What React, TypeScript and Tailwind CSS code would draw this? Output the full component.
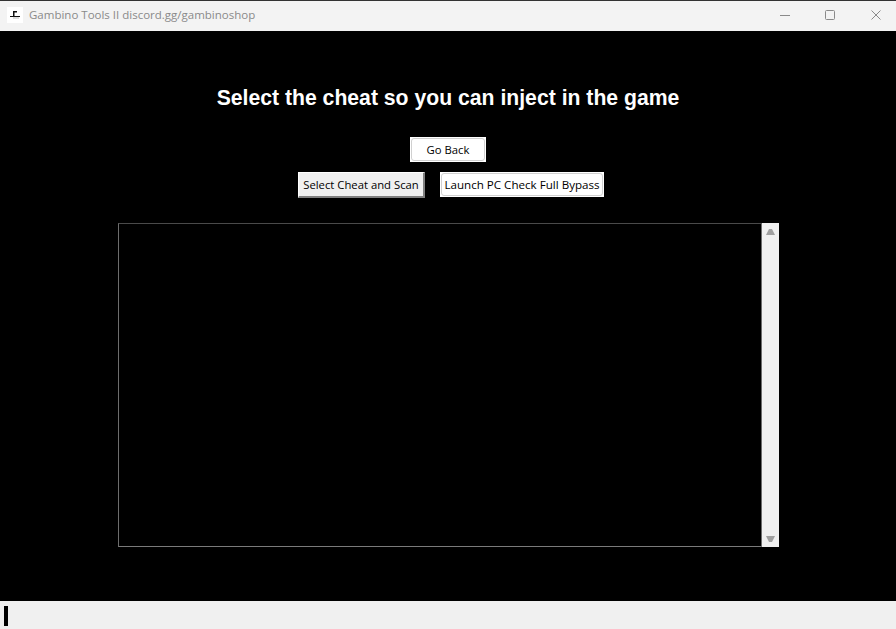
const TitleBar = () => {
  return (
    <header className="flex h-[31px] items-center justify-between border-t border-t-[#333333] bg-[#f3f3f3] pb-[2px] pl-[7px] pr-[15px]">
      <div className="flex items-center gap-[6px]">
        {/* App icon */}
        <div className="flex h-4 w-4 items-center justify-center bg-white">
          <svg width="16" height="16" viewBox="0 0 16 16">
            <path d="M6 10h6v2H6z" fill="#dddddd" />
            <path d="M6 4h4v1.5H7.5V9H13v1H3V9h3z" fill="#111111" />
          </svg>
        </div>
        <span className="font-['Open_Sans'] text-[11.5px] leading-4 text-[#8a8a8a]">
          Gambino Tools II discord.gg/gambinoshop
        </span>
      </div>

      {/* Window controls */}
      <div className="flex items-center">
        <svg className="mr-[35px]" width="10" height="10" viewBox="0 0 10 10">
          <path d="M0 5.5h10" stroke="#8a8a8a" strokeWidth="1" />
        </svg>
        <svg className="mr-9" width="10" height="10" viewBox="0 0 10 10">
          <rect x="0.5" y="0.5" width="9" height="9" rx="1" stroke="#8a8a8a" fill="none" />
        </svg>
        <svg width="10" height="10" viewBox="0 0 10 10">
          <path d="M0.5 0.5l9 9M9.5 0.5l-9 9" stroke="#8a8a8a" strokeWidth="1" />
        </svg>
      </div>
    </header>
  );
};

const App = () => {
  return (
    <div className="flex h-[629px] w-[896px] flex-col overflow-hidden bg-black">
      <TitleBar />

      <main className="flex flex-1 flex-col items-center bg-black pt-[54px]">
        <h1 className="font-['Liberation_Sans'] text-[21.2px] leading-[26px] font-bold text-white">
          Select the cheat so you can inject in the game
        </h1>

        <button className="mt-[26px] flex h-[25px] w-[76px] items-center justify-center bg-white p-[1px]">
          <span className="flex h-full w-full items-center justify-center rounded-[3px] border border-[#d0d0d0] pt-[2px] font-['Open_Sans'] text-[11.3px] text-black">
            Go Back
          </span>
        </button>

        <div className="mt-[10px] flex items-start gap-[15px] pl-[6px]">
          <button className="flex h-[26px] w-[127px] items-center justify-center border-t border-l border-t-white border-l-white border-r-2 border-b-2 border-r-[#808080] border-b-[#808080] bg-[#f0f0f0] pt-[2px] font-['Open_Sans'] text-[11.3px] whitespace-nowrap text-black">
            Select Cheat and Scan
          </button>
          <button className="flex h-[25px] w-[164px] items-center justify-center bg-white p-[1px]">
            <span className="flex h-full w-full items-center justify-center rounded-[3px] border border-[#d0d0d0] font-['Open_Sans'] text-[11.6px] whitespace-nowrap text-black">
              Launch PC Check Full Bypass
            </span>
          </button>
        </div>

        {/* Log output */}
        <div className="mt-[25px] flex h-[324px] w-[661px]">
          <div className="flex-1 border border-t-[#4a4a4a] border-r-[#6d6d6d] border-b-[#7a7a7a] border-l-[#6d6d6d] bg-black" />
          <div className="flex w-[17px] flex-col items-center justify-between bg-[#f0f0f0] pt-[6px] pb-[5px]">
            <svg width="9" height="6" viewBox="0 0 9 6">
              <path d="M3 0h3l3 6H0z" fill="#a0a0a0" />
            </svg>
            <svg width="9" height="6" viewBox="0 0 9 6">
              <path d="M0 0h9L6 6H3z" fill="#a0a0a0" />
            </svg>
          </div>
        </div>
      </main>

      {/* Status input */}
      <footer className="flex h-[28px] items-center bg-[#f0f0f0] pt-[2px] pl-[4px]">
        <div className="h-5 w-1 bg-black" />
      </footer>
    </div>
  );
};

export default App;
